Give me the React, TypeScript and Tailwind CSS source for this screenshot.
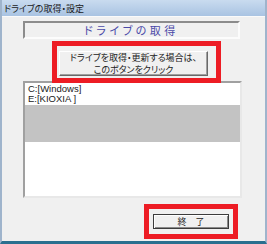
import React from 'react';

const jp = "font-['MS_UI_Gothic','Noto_Sans_CJK_JP',sans-serif] [font-feature-settings:'palt']";

export default function App() {
  return (
    <div className="w-[267px] h-[244px] bg-[#f0f0f0] overflow-hidden">
      <div className="w-full h-full flex flex-col border-l-2 border-r-2 border-b-[3px] border-l-[#9fb4cc] border-r-[#9fb4cc] border-b-[#2a6f8f]">
        {/* title bar */}
        <div className="h-[16px] shrink-0 bg-gradient-to-b from-[#c9dbef] to-[#a9c3e2] flex items-center pl-[2px]">
          <span className={`${jp} text-[9px] leading-none text-[#1a1a1a]`}>ドライブの取得・設定</span>
        </div>

        <div className="flex flex-col border-t border-t-[#fafafa]">
          {/* header */}
          <div className="ml-[21px] mt-[4px] w-[217px] h-[18px] border-2 border-t-[#8c8c8c] border-l-[#8c8c8c] border-b-[#fcfcfc] border-r-[#fcfcfc] flex items-center justify-center">
            <span className={`${jp} text-[11px] leading-none text-[#4a4aa8] tracking-[3.5px]`}>ドライブの取得</span>
          </div>

          {/* red frame with update button */}
          <div className="relative z-10 ml-[50px] mt-[2px] w-[169px] border-[5px] border-[#ed1c24] pl-[2px] pr-[8px] pt-[5px] pb-[2px]">
            <button className="w-[149px] h-[25px] bg-[#f0f0f0] border border-t-[#ffffff] border-l-[#ffffff] border-b-[#696969] border-r-[#696969] shadow-[inset_-1px_-1px_0_#a0a0a0] flex flex-col items-center justify-center">
              <span className={`${jp} block text-[9px] leading-[12px] text-[#222]`}>ドライブを取得・更新する場合は、</span>
              <span className={`${jp} block text-[9px] leading-[12px] text-[#222]`}>このボタンをクリック</span>
            </button>
          </div>

          {/* list */}
          <div className="ml-[21px] -mt-[2px] w-[219px] h-[117px] bg-white border-2 border-t-[#a0a0a0] border-l-[#a0a0a0] border-b-[#e8e8e8] border-r-[#e8e8e8] flex flex-col">
            <div className="pl-[3px] pt-[1px] flex flex-col">
              <span className="font-['Liberation_Sans',sans-serif] text-[9.5px] leading-[10px] text-[#222]">C:[Windows]</span>
              <span className="font-['Liberation_Sans',sans-serif] text-[9.5px] leading-[10px] text-[#222]">E:[KIOXIA ]</span>
            </div>
            <div className="mt-[1px] h-[37px] bg-[#c3c3c3]" />
          </div>

          {/* red frame with close button */}
          <div className="ml-[142px] mt-[6px] w-[94px] border-[5px] border-[#ed1c24] px-[4px] py-[5px]">
            <button className="w-[76px] h-[15px] bg-[#f0f0f0] border border-[#3c3c3c] shadow-[inset_1px_1px_0_#ffffff,inset_-1px_-1px_0_#8a8a8a] flex items-center justify-center">
              <span className={`${jp} text-[9px] leading-none text-[#222]`}>終　了</span>
            </button>
          </div>
        </div>
      </div>
    </div>
  );
}
